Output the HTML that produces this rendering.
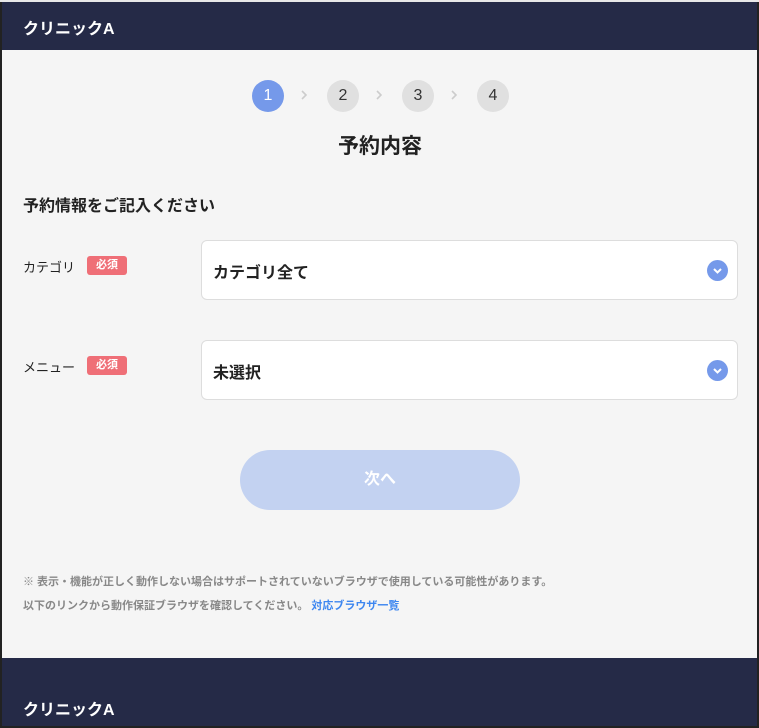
<!DOCTYPE html>
<html><head><meta charset="utf-8"><style>
*{margin:0;padding:0;box-sizing:border-box}
body{width:759px;height:728px;background:#222;position:relative;overflow:hidden;font-family:"Liberation Sans","Noto Sans CJK JP",sans-serif}
.page{position:absolute;left:2px;top:2px;width:755px;height:724px;background:#f5f5f5}
.top{position:absolute;left:0;top:0;width:759px;height:2px;background:#e8e8e8}
.hd{position:absolute;left:0;top:0;width:755px;height:48px;background:#252a47;color:#fff;font-weight:bold;font-size:16px;padding:13px 0 0 21px}
.ft{position:absolute;left:0;top:656px;width:755px;height:68px;background:#252a47;color:#fff;font-weight:bold;font-size:16px;padding:38px 0 0 21px}
.st{position:absolute;top:78px;width:32px;height:32px;border-radius:50%;background:#e0e0e0;color:#333;text-align:center;line-height:32px;font-size:16px}
.ar{position:absolute;top:87px}
.t{position:absolute;font-weight:bold;color:#222}
.lb{position:absolute;left:21px;font-size:13px;color:#222}
.rq{position:absolute;left:85px;width:40px;height:19px;background:#ef6f77;color:#fff;border-radius:3px;font-size:11px;font-weight:bold;text-align:center;line-height:19px}
.sel{position:absolute;left:199px;width:537px;height:60px;background:#fff;border:1px solid #ddd;border-radius:6px;font-weight:bold;font-size:16px;padding:18px 0 0 11px;color:#222}
.ic{position:absolute;right:9px;top:19px;width:21px;height:21px;border-radius:50%;background:#7599ea}
.btn{position:absolute;left:238px;top:448px;width:280px;height:60px;border-radius:30px;background:#c3d2f1;color:#fff;font-weight:bold;font-size:16px;text-align:center;line-height:60px}
.n{position:absolute;left:21px;font-size:11px;color:#888;font-weight:bold}
</style></head><body>
<div class="top"></div>
<div class="page">
<div class="hd">クリニックA</div>
<div class="st" style="left:250px;background:#7599ea;color:#fff">1</div>
<svg class="ar" style="left:298px" width="8" height="12"><path d="M2 2l4 4-4 4" stroke="#ccc" stroke-width="1.6" fill="none"/></svg>
<div class="st" style="left:325px">2</div>
<svg class="ar" style="left:373px" width="8" height="12"><path d="M2 2l4 4-4 4" stroke="#ccc" stroke-width="1.6" fill="none"/></svg>
<div class="st" style="left:400px">3</div>
<svg class="ar" style="left:448px" width="8" height="12"><path d="M2 2l4 4-4 4" stroke="#ccc" stroke-width="1.6" fill="none"/></svg>
<div class="st" style="left:475px">4</div>
<div class="t" style="left:336px;top:128px;font-size:21px">予約内容</div>
<div class="t" style="left:21px;top:190px;font-size:16px">予約情報をご記入ください</div>
<div class="lb" style="top:255px">カテゴリ</div><div class="rq" style="top:254px">必須</div>
<div class="sel" style="top:238px">カテゴリ全て<div class="ic"><svg width="21" height="21"><path d="M7 9l3.5 3.5L14 9" stroke="#fff" stroke-width="2" fill="none"/></svg></div></div>
<div class="lb" style="top:355px">メニュー</div><div class="rq" style="top:354px">必須</div>
<div class="sel" style="top:338px">未選択<div class="ic"><svg width="21" height="21"><path d="M7 9l3.5 3.5L14 9" stroke="#fff" stroke-width="2" fill="none"/></svg></div></div>
<div class="btn">次へ</div>
<div class="n" style="top:571px">※ 表示・機能が正しく動作しない場合はサポートされていないブラウザで使用している可能性があります。</div>
<div class="n" style="top:595px">以下のリンクから動作保証ブラウザを確認してください。 <span style="color:#3d86f0">対応ブラウザ一覧</span></div>
<div class="ft">クリニックA</div>
</div>
</body></html>
